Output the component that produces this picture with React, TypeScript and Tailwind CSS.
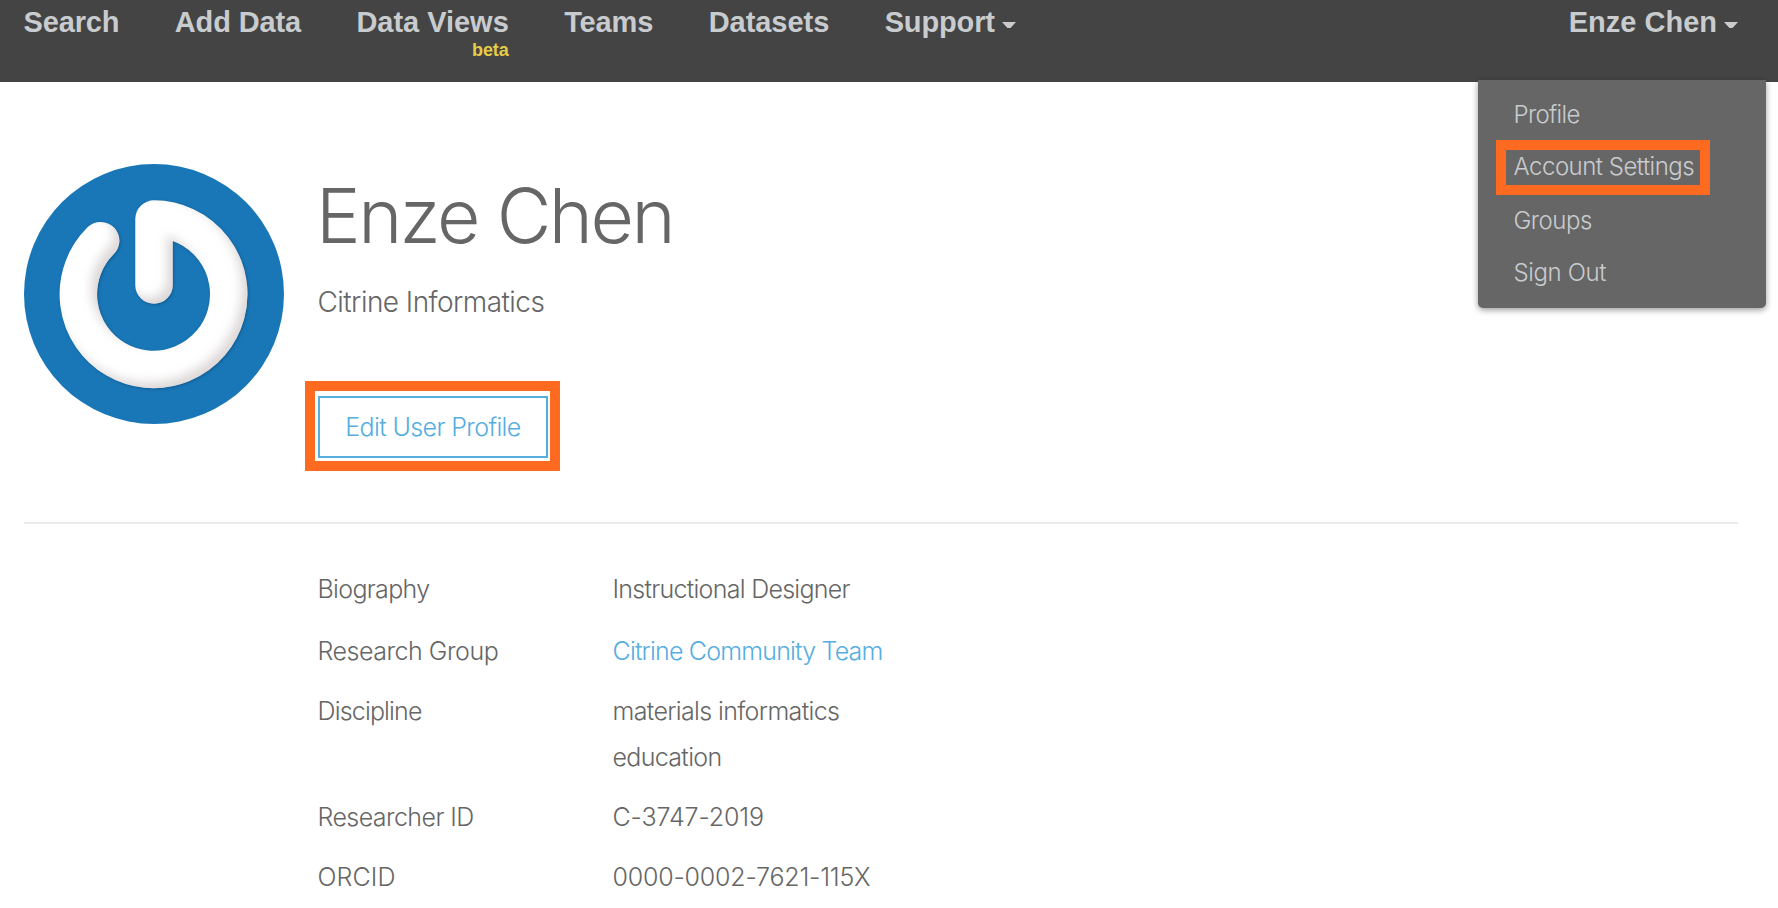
import type { ReactNode } from "react";

function Caret() {
  return (
    <svg width="14" height="6" viewBox="0 0 14 6" className="mt-[22px]" fill="currentColor">
      <path d="M0 0H14L9 5.400Q8.500 6 7.600 6H6.400Q5.500 6 5 5.400Z" />
    </svg>
  );
}

function NavItem({ children, className = "" }: { children: ReactNode; className?: string }) {
  return (
    <a className={`mt-[6px] block text-[29px] leading-8 font-bold whitespace-nowrap ${className}`}>{children}</a>
  );
}

const menuItems = [
  { label: "Profile", style: "tracking-[-0.67px]" },
  { label: "Account Settings", style: "mb-0.5 tracking-[-0.5px]", marked: true },
  { label: "Groups", style: "tracking-[-0.5px]" },
  { label: "Sign Out", style: "tracking-[-0.38px]" },
];

function UserMenu() {
  return (
    <div className="absolute top-20 right-3 z-10 h-[228px] w-72 rounded-b-[5px] bg-[#666666] pt-[9px] pl-[35.5px] font-['Inter',sans-serif] text-2xl font-light text-[#c9ccce] shadow-[0_2px_6px_rgba(0,0,0,0.4)]">
      {menuItems.map((item) => (
        <div key={item.label} className={`relative h-[52px] leading-[52px] ${item.style}`}>
          {item.label}
          {item.marked && (
            <div className="absolute -top-px -left-[17.5px] h-[55px] w-[214px] border-10 border-[#fd6a20]" />
          )}
        </div>
      ))}
    </div>
  );
}

function Avatar() {
  return (
    <svg width="260" height="260" viewBox="0 0 260 260" className="shrink-0 rounded-full">
      <defs>
        <filter id="bevel" filterUnits="userSpaceOnUse" x="0" y="0" width="260" height="260" colorInterpolationFilters="sRGB">
          <feDropShadow dx="1" dy="1" stdDeviation="1.500" floodColor="#0b3f68" floodOpacity="0.5" result="drop" />
          <feOffset in="SourceAlpha" dx="-6" dy="-6" result="moved" />
          <feGaussianBlur in="moved" stdDeviation="5" result="soft" />
          <feComposite in="SourceAlpha" in2="soft" operator="out" result="edge" />
          <feFlood floodColor="#bdb3b3" floodOpacity="0.5" />
          <feComposite in2="edge" operator="in" result="shade" />
          <feMerge>
            <feMergeNode in="drop" />
            <feMergeNode in="shade" />
          </feMerge>
        </filter>
      </defs>
      <rect width="260" height="260" fill="#1977b7" />
      <path
        d="M76.700 76.700A75.200 75.200 0 1 0 130 55V121"
        fill="none"
        stroke="#ffffff"
        strokeWidth="37.500"
        strokeLinecap="round"
        strokeLinejoin="round"
        filter="url(#bevel)"
      />
    </svg>
  );
}

const details = [
  { label: "Biography", lt: "tracking-[-0.67px]", values: [{ text: "Instructional Designer", vt: "tracking-[-0.72px]" }], gap: "mb-4" },
  { label: "Research Group", lt: "tracking-[-0.48px]", values: [{ text: "Citrine Community Team", vt: "tracking-[-0.81px] text-[#56ade0]" }], gap: "mb-3.5" },
  {
    label: "Discipline",
    lt: "tracking-[-0.83px]",
    values: [
      { text: "materials informatics", vt: "tracking-[-0.64px]" },
      { text: "education", vt: "tracking-[-0.67px]" },
    ],
    gap: "mb-3.5",
  },
  { label: "Researcher ID", lt: "tracking-[-0.58px]", values: [{ text: "C-3747-2019", vt: "tracking-[-0.12px]" }], gap: "mb-3.5" },
  { label: "ORCID", lt: "tracking-[0.1px]", values: [{ text: "0000-0002-7621-115X", vt: "tracking-[-0.2px]" }], gap: "" },
];

export default function App() {
  return (
    <div className="relative h-[908px] w-[1778px] overflow-hidden bg-white font-['Inter',sans-serif] text-[#666666]">
      <header className="flex h-[82px] items-start justify-between bg-[#444444] pr-10 pl-[23.5px] font-['Liberation_Sans',sans-serif] text-[#c9ccce]">
        <nav className="flex items-start gap-[55.4px]">
          <NavItem className="tracking-[-0.15px]">Search</NavItem>
          <NavItem className="tracking-[-0.12px]">Add Data</NavItem>
          <div>
            <NavItem className="tracking-[-0.03px]">Data Views</NavItem>
            <div className="mt-0.5 text-right text-lg leading-5 font-bold tracking-[-0.05px] text-[#e5cc47]">beta</div>
          </div>
          <NavItem className="tracking-[-0.12px]">Teams</NavItem>
          <NavItem className="tracking-[-0.04px]">Datasets</NavItem>
          <div className="flex items-start gap-[7px]">
            <NavItem className="tracking-[-0.13px]">Support</NavItem>
            <Caret />
          </div>
        </nav>
        <div className="flex items-start gap-[7px]">
          <NavItem>Enze Chen</NavItem>
          <Caret />
        </div>
      </header>
      <UserMenu />

      <main className="pt-[82px] pr-10 pl-6 font-light">
        <section className="flex h-[360px] items-start border-b-2 border-[#ebebeb]">
          <Avatar />
          <div className="ml-[33px] pt-3">
            <h1 className="-ml-px text-[75px] leading-[80px] font-light tracking-[-2.45px]">Enze Chen</h1>
            <p className="mt-[30px] pl-[0.5px] text-[28px] leading-8 tracking-[-0.55px]">Citrine Informatics</p>
            <div className="mt-[63px] -ml-3 h-[90px] w-[255px] border-10 border-[#fd6a20] px-[3px] py-[5px]">
              <button className="h-[62px] w-[230px] border-2 border-[#56ade0] pt-px text-[25px] tracking-[-0.62px] whitespace-nowrap text-[#56ade0]">
                Edit User Profile
              </button>
            </div>
          </div>
        </section>

        <dl className="pt-[42px] pl-[293.5px] text-[25px] leading-[46px]">
          {details.map((row) => (
            <div key={row.label} className={`flex ${row.gap}`}>
              <dt className={`w-[295px] ${row.lt}`}>{row.label}</dt>
              <dd>
                {row.values.map((v) => (
                  <div key={v.text} className={v.vt}>
                    {v.text}
                  </div>
                ))}
              </dd>
            </div>
          ))}
        </dl>
      </main>
    </div>
  );
}
